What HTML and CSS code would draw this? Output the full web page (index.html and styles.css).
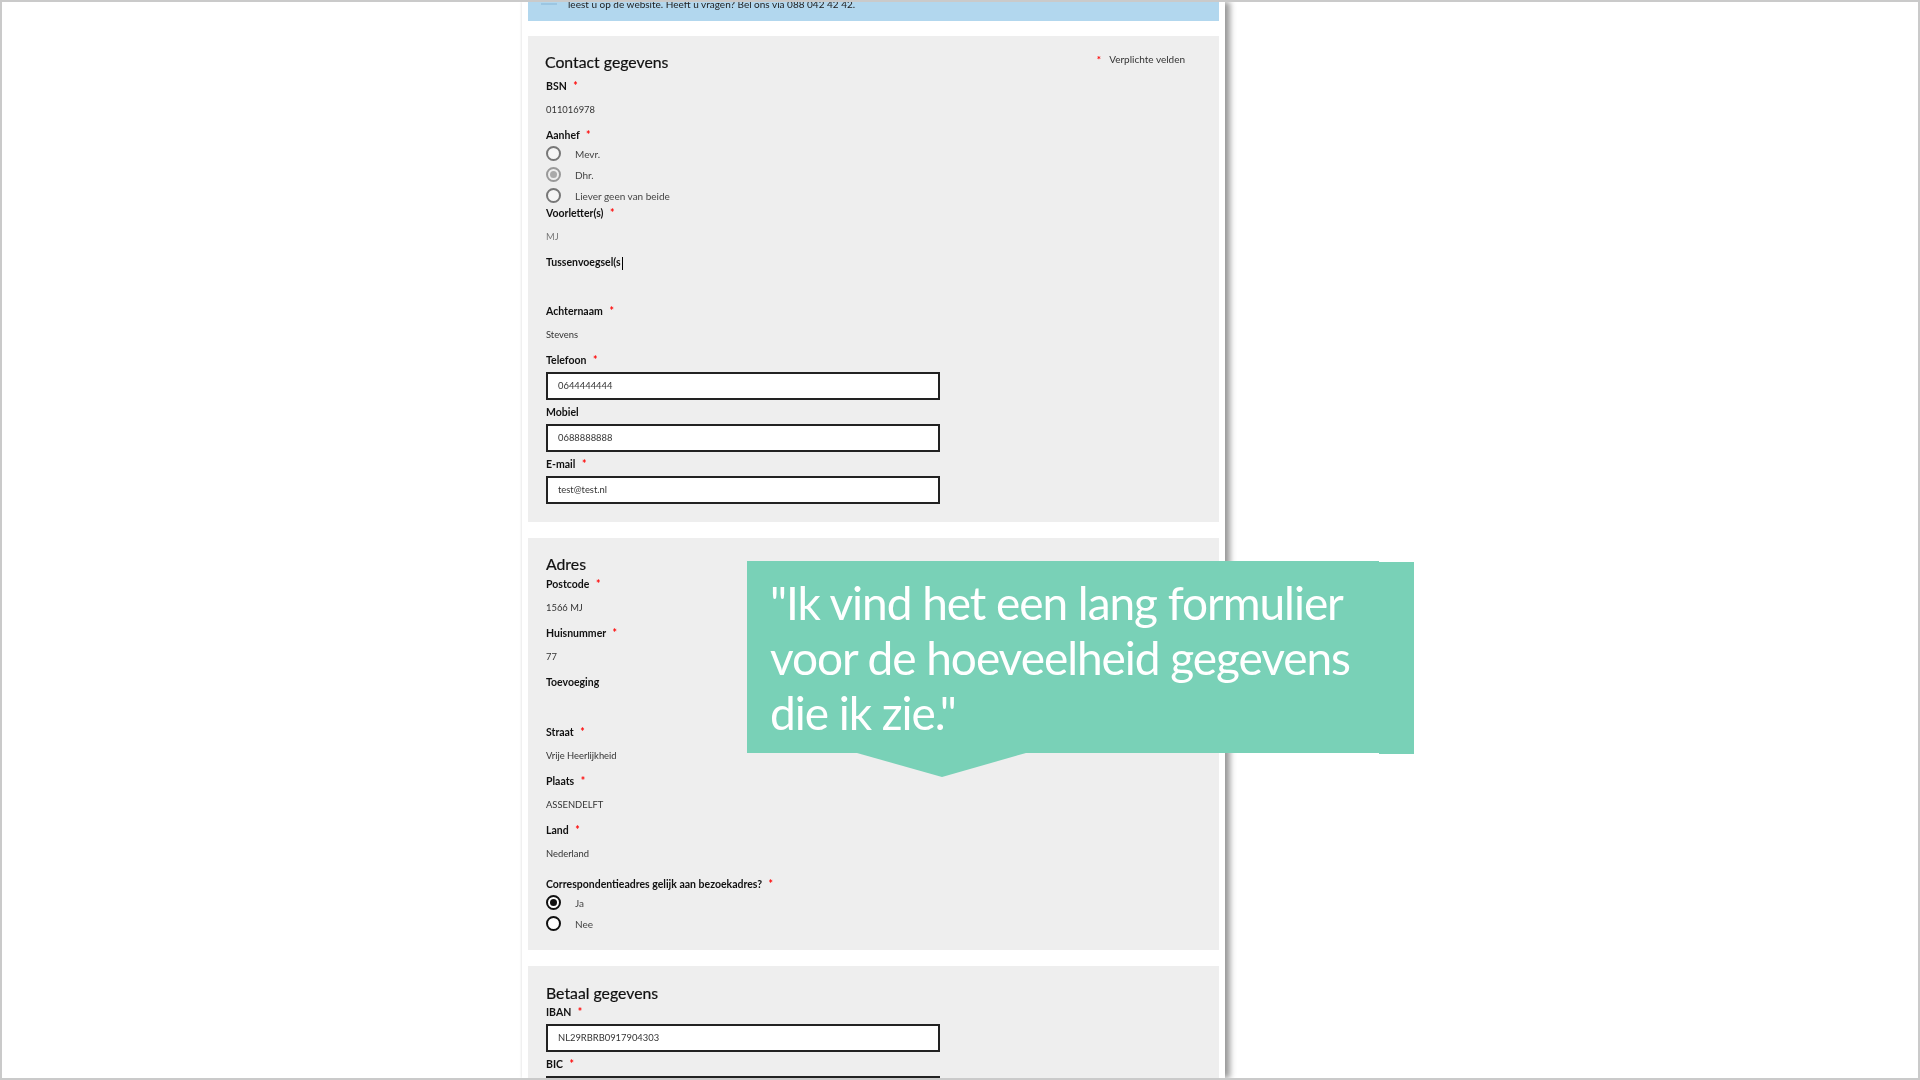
FILE: index.html
```html
<!DOCTYPE html>
<html lang="nl">
  <head>
    <meta charset="UTF-8" />
    <title>Contact gegevens</title>
    <link rel="stylesheet" href="styles.css">
  </head>
  <body>
    <div class="frame">
      <div class="sheet">
        <div class="notice">
          <span class="notice-icon"></span>
          <p>leest u op de website. Heeft u vragen? Bel ons via 088 042 42 42.</p>
        </div>

        <section class="block contact">
          <p class="required-note"><span class="star">*</span>Verplichte velden</p>
          <h2 class="title-first">Contact gegevens</h2>

          <div class="field">
            <div class="label">BSN <span class="star">*</span></div>
            <div class="value">011016978</div>
          </div>

          <div class="label">Aanhef <span class="star">*</span></div>
          <div class="radios">
            <label class="radio"><span class="dot"></span>Mevr.</label>
            <label class="radio"><span class="dot disabled"></span>Dhr.</label>
            <label class="radio"><span class="dot"></span>Liever geen van beide</label>
          </div>

          <div class="field">
            <div class="label">Voorletter(s) <span class="star">*</span></div>
            <div class="value light">MJ</div>
          </div>
          <div class="field">
            <div class="label">Tussenvoegsel(s<span class="caret"></span></div>
            <div class="value"></div>
          </div>
          <div class="field">
            <div class="label">Achternaam <span class="star">*</span></div>
            <div class="value">Stevens</div>
          </div>

          <div class="label">Telefoon <span class="star">*</span></div>
          <div class="input">0644444444</div>
          <div class="label">Mobiel</div>
          <div class="input">0688888888</div>
          <div class="label">E-mail <span class="star">*</span></div>
          <div class="input">test@test.nl</div>
        </section>

        <section class="block">
          <h2>Adres</h2>
          <div class="field">
            <div class="label">Postcode <span class="star">*</span></div>
            <div class="value">1566 MJ</div>
          </div>
          <div class="field">
            <div class="label">Huisnummer <span class="star">*</span></div>
            <div class="value">77</div>
          </div>
          <div class="field">
            <div class="label">Toevoeging</div>
            <div class="value"></div>
          </div>
          <div class="field">
            <div class="label">Straat <span class="star">*</span></div>
            <div class="value">Vrije Heerlijkheid</div>
          </div>
          <div class="field">
            <div class="label">Plaats <span class="star">*</span></div>
            <div class="value">ASSENDELFT</div>
          </div>
          <div class="field">
            <div class="label">Land <span class="star">*</span></div>
            <div class="value">Nederland</div>
          </div>
          <div class="label question">Correspondentieadres gelijk aan bezoekadres? <span class="star">*</span></div>
          <div class="radios answer">
            <label class="radio"><span class="dot checked"></span>Ja</label>
            <label class="radio"><span class="dot strong"></span>Nee</label>
          </div>
        </section>

        <section class="block last">
          <h2>Betaal gegevens</h2>
          <div class="label">IBAN <span class="star">*</span></div>
          <div class="input">NL29RBRB0917904303</div>
          <div class="label">BIC <span class="star">*</span></div>
          <div class="input"></div>
        </section>
      </div>

      <div class="quote">
        <p>"Ik vind het een lang formulier voor de hoeveelheid gegevens die ik zie."</p>
      </div>
    </div>
  </body>
</html>
```

FILE: styles.css
```css
* {
  box-sizing: border-box;
}
html,
body {
  margin: 0;
  height: 100%;
  overflow: hidden;
  background: #fff;
}
body {
  font-family: "Lato", "Open Sans", sans-serif;
  color: #111;
}
p,
h2 {
  margin: 0;
}
.frame {
  position: relative;
  width: 1920px;
  height: 1080px;
  border: 2px solid #cacaca;
  overflow: hidden;
}
.sheet {
  width: 703px;
  height: 1076px;
  margin-left: 520px;
  padding: 0 6px;
  background: #fff;
  box-shadow: 5px 0 6px #999, -1px 0 2px #eee;
  overflow: hidden;
  filter: blur(0.5px);
}
.notice {
  display: flex;
  gap: 11px;
  height: 19px;
  padding-left: 13px;
  background: #b2d7ee;
  overflow: hidden;
  font-size: 10px;
  color: #222;
}
.notice p {
  margin-top: -5px;
  line-height: 14px;
}
.notice-icon {
  width: 16px;
  height: 2px;
  margin-top: 1px;
  background: #9cc6e2;
}
.block {
  position: relative;
  margin-top: 16px;
  padding: 16px 18px 14px;
  background: #eee;
}
.block.contact {
  margin-top: 15px;
}
.block.last {
  height: 200px;
  padding-top: 17px;
}
.block.last h2 {
  margin-bottom: 1px;
}
h2 {
  font-size: 15.8px;
  line-height: 20px;
  font-weight: 400;
  -webkit-text-stroke: 0.2px #111;
  margin-bottom: 2px;
}
.title-first {
  margin-left: -1px;
  margin-bottom: 6px;
}
.required-note {
  position: absolute;
  top: 17px;
  right: 34px;
  font-size: 10px;
  color: #333;
}
.required-note .star {
  margin-right: 8px;
}
.label {
  height: 16px;
  font-size: 10.5px;
  line-height: 16px;
  font-weight: 700;
}
.star {
  margin-left: 4px;
  color: #f00;
  font-weight: 700;
}
.field {
  height: 49.2px;
}
.contact .field {
  height: 49px;
}
.value {
  height: 33px;
  font-size: 9.4px;
  line-height: 31px;
  color: #333;
}
.value.light {
  color: #777;
}
.caret {
  display: inline-block;
  width: 1px;
  height: 13px;
  margin-left: 1px;
  vertical-align: middle;
  background: #000;
}
.input {
  width: 394px;
  height: 28px;
  margin: 4px 0;
  padding-left: 10px;
  border: 2px solid #222;
  background: #fff;
  font-size: 9.4px;
  line-height: 24px;
  color: #333;
}
.radios {
  display: flex;
  flex-direction: column;
  gap: 6px;
  margin: 3px 0 2px;
}
.radios.answer {
  margin-bottom: 5px;
}
.radio {
  display: flex;
  align-items: center;
  gap: 14px;
  height: 15px;
  font-size: 10px;
  color: #444;
}
.dot {
  position: relative;
  width: 15px;
  height: 15px;
  border: 2px solid #777;
  border-radius: 50%;
  background: #f5f5f5;
}
.dot.disabled {
  border-color: #999;
  background: #eee;
}
.dot.disabled::after,
.dot.checked::after {
  content: "";
  position: absolute;
  top: 2px;
  left: 2px;
  width: 7px;
  height: 7px;
  border-radius: 50%;
  background: #aaa;
}
.dot.checked,
.dot.strong {
  border-color: #111;
  background: #fff;
}
.dot.checked::after {
  background: #111;
}
.question {
  margin-top: 5px;
}
.quote {
  position: absolute;
  top: 559px;
  left: 745px;
  width: 632px;
  height: 192px;
  padding: 14px 0 0 23px;
  background: #79d1b7;
  color: #fff;
  font-size: 46px;
  line-height: 55px;
  letter-spacing: -1.05px;
}
.quote p {
  width: 620px;
  filter: blur(0.3px);
}
.quote::before {
  content: "";
  position: absolute;
  top: 1px;
  left: 100%;
  width: 35px;
  height: 192px;
  background: #79d1b7;
}
.quote::after {
  content: "";
  position: absolute;
  top: 100%;
  left: 110px;
  border-top: 24px solid #79d1b7;
  border-left: 85px solid transparent;
  border-right: 84px solid transparent;
}
```
